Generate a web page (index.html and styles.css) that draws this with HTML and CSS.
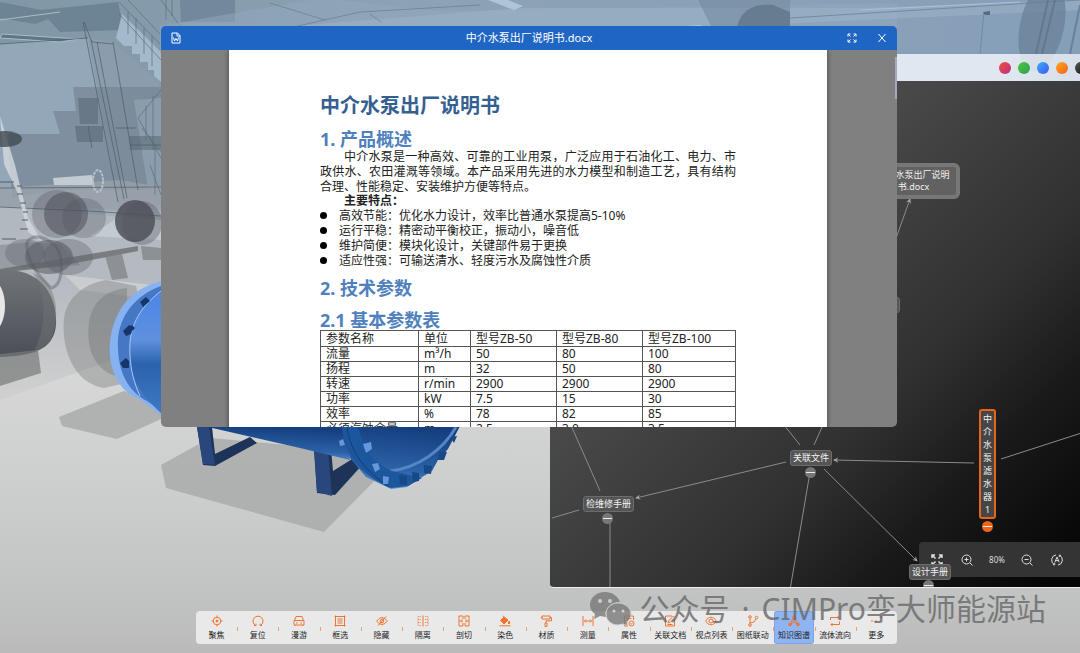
FILE: index.html
```html
<!DOCTYPE html>
<html lang="zh-CN">
<head>
<meta charset="utf-8">
<meta name="viewport" content="width=device-width, initial-scale=1">
<title>CIMPro 能源站</title>
<link rel="stylesheet" href="styles.css">
</head>
<body>
<main class="desktop">
  <svg class="scene" viewBox="0 0 1080 653" preserveAspectRatio="xMinYMin slice" aria-hidden="true">
    <defs>
      <linearGradient id="sky" x2="0" y2="1"><stop offset="0" stop-color="#8299ab"/><stop offset=".3" stop-color="#9dabb8"/><stop offset=".45" stop-color="#b9bdc3"/><stop offset=".6" stop-color="#cfcfcf"/><stop offset="1" stop-color="#d3d3d3"/></linearGradient>
      <linearGradient id="floor" x2="0" y2="1"><stop offset="0" stop-color="#d9d9d9"/><stop offset=".45" stop-color="#cdcece"/><stop offset=".8" stop-color="#c2c4c3"/><stop offset="1" stop-color="#bababa"/></linearGradient>
      <linearGradient id="roof" x2="1" y2="0"><stop offset="0" stop-color="#8197a6"/><stop offset=".4" stop-color="#8da2b4"/><stop offset="1" stop-color="#869fb9"/></linearGradient>
      <linearGradient id="pipe" x2="0" y2="1"><stop offset="0" stop-color="#4c86e6"/><stop offset=".4" stop-color="#5f90de"/><stop offset=".6" stop-color="#2b63ac"/><stop offset="1" stop-color="#3e77c6"/></linearGradient>
      <linearGradient id="tank" x1=".4" y1="0" x2=".2" y2="1"><stop offset="0" stop-color="#153f7f"/><stop offset=".65" stop-color="#2c62a8"/><stop offset="1" stop-color="#6699d8"/></linearGradient>
      <linearGradient id="ball" x2="0" y2="1"><stop offset="0" stop-color="#717477"/><stop offset="1" stop-color="#4b4e57"/></linearGradient>
    </defs>
    <rect width="1080" height="653" fill="url(#sky)"/>
    <rect width="1080" height="90" fill="url(#roof)"/>
    <path d="M0 400 118 358 161 345H1080V653H0z" fill="url(#floor)"/>
    <!-- rear walls and roof -->
    <path d="M0 44 88 38 120 210 0 206z" fill="#94a7b9"/>
    <path d="M88 38 113 42 161 84V205L120 210z" fill="#8b9dac"/>
    <path d="M0 2 62 14 35 24 0 18zM40 10 118 2 124 30 60 32z" fill="#6d8494"/>
    <path d="M180 0h55v22h-54z" fill="#73889a"/>
    <path d="M122 14 161 52V82L154 76 154 70 148 70 148 62 140 62 140 54 132 54 132 46 124 46 116 38z" fill="#a3bacd"/>
    <path d="M2 34 79 39 60 42 0 38zM0 20 60 12" fill="#5f7687" stroke="#a9bccb"/>
    <path d="M73 87H161V98L134 100 148 190H56L12 198 8 134H60L53 111H76z" fill="#73818f" opacity=".62"/>
    <path d="M78 98H98V124H80zM75 126h28v16H77zM129 136h32v14h-31z" fill="#505d68" opacity=".45"/>
    <path d="M0 188 120 180 161 187V210L0 207z" fill="#9aa1aa" opacity=".8"/>
    <path d="M0 207 100 215 161 220V280L90 276 0 270z" fill="#b5bac0" opacity=".8"/>
    <path d="M53 178 92 175 94 185H54zM120 216 161 220V240L90 236z" fill="#c3cbd2"/>
    <path d="M83 22 118 202M91 40 124 199M97 42 127 198M113 42 138 190M0 44 88 38M0 188 161 187M0 207 90 211 161 216M84 22 92 42 113 44M116 128h20M130 145h31M88 126 92 148" fill="none" stroke="#4f5c69" stroke-width="1" opacity=".7"/>
    <path d="M119 2 161 45M128 0 161 35M119 14 161 60M138 118 161 90M138 118 161 158M142 128 161 152M146 106V140M153 96V150M128 12V34M136 18V44M144 28V54M152 36V66M161 0 180 26M166 0V20M172 0V16M150 165l11 30M155 145v50" fill="none" stroke="#586b79" opacity=".65"/>
    <ellipse cx="98" cy="181" rx="5" ry="11" fill="none" stroke="#b9c1c8" stroke-width="2" stroke-dasharray="3 1"/>
    <path d="M0 116 15 165 28 218 42 242 28 232 18 194 4 164z" fill="#d5dade" opacity=".8"/>
    <path d="M0 182h14M17 186h5M17 194h6M20 203h6M23 212h5M22 220h6M20 229h8M2 239h14" stroke="#565d64" stroke-width="1"/>
    <ellipse cx="5" cy="139" rx="17" ry="8" fill="#414b50" opacity=".8"/>
    <!-- translucent vessels -->
    <g fill="#4f5159">
      <ellipse cx="57" cy="214" rx="25" ry="24" opacity=".3"/><ellipse cx="66" cy="214" rx="22" ry="22" opacity=".55"/><ellipse cx="84" cy="218" rx="22" ry="20" opacity=".28"/>
      <ellipse cx="142" cy="223" rx="20" ry="22" opacity=".35"/><ellipse cx="135" cy="221" rx="20" ry="21" opacity=".85"/>
      <ellipse cx="25" cy="253" rx="20" ry="14" opacity=".3"/><ellipse cx="49" cy="257" rx="24" ry="17" opacity=".5"/><ellipse cx="68" cy="257" rx="25" ry="18" opacity=".3"/>
    </g>
    <path d="M32 242 60 244 80 265 0 271V245z" fill="#626870" opacity=".35"/>
    <path d="M0 269 138 246V251L60 266 0 273z" fill="#606468" opacity=".7"/>
    <path d="M105 256 122 254 128 278 112 280zM141 246 161 248V260H143z" fill="#7c7f82" opacity=".7"/>
    <path d="M27 242c-2 18 12 34 24 46 12-2 12-26 8-36S36 230 27 242z" fill="none" stroke="#555b60" stroke-width="3" opacity=".4"/>
    <path d="M65 275 161 286V300L80 290z" fill="#d0d1d3" opacity=".8"/>
    <path d="M64 318c2-18 18-34 42-38l30 6 20 90-52 12c-32-5-43-42-40-70z" fill="#797b7a" opacity=".4"/>
    <path d="M89 322c4-22 18-32 38-34v90c-30-2-42-26-38-56z" fill="#6b6e6e" opacity=".35"/>
    <path d="M0 270c34-2 54 17 56 48s-22 38-56 39z" fill="url(#ball)"/>
    <path d="M33 273c24 8 29 42 17 69l-17 12c15-30 13-61 0-81z" fill="#747678" opacity=".45"/>
    <path d="M0 354 38 350 41 373 0 386z" fill="#777a79" opacity=".7"/>
    <path d="M59 417 124 391 161 405V419L117 439 62 426zM161 465 210 438 400 455 324 532 166 488z" fill="#a8aaa9" opacity=".82"/>
    <!-- pump body -->
    <path d="M161 281c-25 7-43 21-50 54-6 31 9 58 27 63l23 17z" fill="#87b2f1"/>
    <path d="M161 286c-27 10-45 32-43 63 1 27 13 44 29 52l14 10z" fill="#4577c4"/>
    <path d="M161 291c-22 18-33 36-31 65 1 23 9 36 31 57z" fill="url(#pipe)"/>
    <path d="M161 291c-23 18-33 37-31 65 1 15 4 27 10 40" fill="none" stroke="#a4c9fa" stroke-width="1"/>
    <path d="m140 302 6-5 4 4-7 6zM126 328l6-3 3 3-6 6zM123 331l6-6 4 3-2 6-5 2zM120 363l6-5 3 3v7h-6z" fill="#16366a"/>
    <path d="M197 427h15l3 27 35-17 7 6-42 23-12-1zM314 448h17l2 23 24-15 7 7-29 32-18-2z" fill="#1d3357"/>
    <path d="M197 427h12l6 38-12-1zM314 450h14l4 46-15-4z" fill="#29477c"/>
    <path d="M208 427H344L350 460 300 448z" fill="url(#tank)"/>
    <path d="M340 426H460L448 449 438 460 432 471 419 479 407 487 391 489 366 477 350 458z" fill="url(#tank)"/>
    <path d="M456 427c-13 23-38 41-66 44" fill="none" stroke="#5585c2" stroke-width="3"/>
    <path d="M342 427c3 27 19 49 49 61l17-2 14-8-30-7c-18-7-28-22-34-44z" fill="#1c569c"/>
    <path d="M347 427c4 28 20 45 42 60" fill="none" stroke="#133e78" stroke-width="1"/>
    <g fill="#6597dc"><path d="m339 441 4-2 2 6-5 1zM363 444l8-2 1 7-6 4zM372 464l6-1 2 6-5 3zM383 476l6 1-1 7h-5z"/></g>
    <g fill="#174987"><path d="m399 475 8 1v9l-7-1zM412 472l7 1v8l-6 1zM424 465l8 1-1 8-7-1zM439 451l8 1-3 8h-6zM450 437l7-1-3 7z"/></g>
    <!-- roof on the right side -->
    <path d="M160 26 310 0H340L440 11 897 3V54H160z" fill="#91a8bf" opacity=".5"/>
    <path d="M240 30 520 8 860 8 1080 0V10L800 23 560 34z" fill="#9db3c8" opacity=".5"/>
    <path d="M488 0 514 10 523 6 508 0zM560 35 700 25 720 34H560z" fill="#b6cde0" opacity=".8"/>
    <path d="M698 0 790 0V34H715z" fill="#748b9f" opacity=".6"/>
    <path d="M736 34c2-25 19-31 37-29l17 7v22z" fill="#5d7486" opacity=".75"/>
    <path d="M270 3 325 20M370 14l11 8M280 30 360 12 480 5M790 18 1080 0" fill="none" stroke="#647b8e" opacity=".65"/>
    <path d="M860 10 1020 2" fill="none" stroke="#abc0d4"/>
    <path d="M984 12 980 54" fill="none" stroke="#728aa1"/>
    <ellipse cx="1042" cy="26" rx="22" ry="46" transform="rotate(12 1042 26)" fill="#627b91" opacity=".62"/>
    <path d="M1048 0 1036 54M1055 0 1042 54M1080 5 1070 54" stroke="#566f86" stroke-width="2" opacity=".6"/>
    <path d="m983 12 7-1v4h-5z" fill="#566b7e"/>
  </svg>
  <button class="side-handle" type="button" aria-label="展开侧栏"></button>

  <section class="graph" aria-label="知识图谱">
    <header class="graph-bar">
      <button class="dot dot-red" type="button" aria-label="红色主题"></button>
      <button class="dot dot-green" type="button" aria-label="绿色主题"></button>
      <button class="dot dot-blue" type="button" aria-label="蓝色主题"></button>
      <button class="dot dot-orange" type="button" aria-label="橙色主题"></button>
      <button class="dot dot-dark" type="button" aria-label="深色主题"></button>
    </header>
    <div class="canvas">
      <svg class="edges" viewBox="550 81 560 506" preserveAspectRatio="xMinYMin slice" aria-hidden="true">
        <defs><marker id="arrow" viewBox="0 0 8 8" refX="6" refY="4" markerWidth="7" markerHeight="7" orient="auto"><path d="M1 1 7 4 1 7 3 4z" fill="#a5a5a5"/></marker></defs>
        <g fill="none" stroke="#8b8b8b">
          <path d="M570 423 600 491M552 518 579 510M610 523V590M784 425 800 445M823 425 814 445M1001 459 1100 427M809 478 790 590"/>
          <path marker-end="url(#arrow)" d="M786 462 636 498"/>
          <path marker-end="url(#arrow)" d="M974 463 834 460"/>
          <path marker-end="url(#arrow)" d="M824 469 917 561"/>
          <path marker-end="url(#arrow)" d="M894 244 910 199"/>
        </g>
      </svg>
      <div class="node node-doc">中介水泵出厂说明<br>书.docx</div>
      <div class="node node-behind">维修记录s</div>
      <div class="node node-files">关联文件</div>
      <button class="fold fold-files" type="button" aria-label="折叠关联文件"></button>
      <div class="node node-repair">检维修手册</div>
      <button class="fold fold-repair" type="button" aria-label="折叠检维修手册"></button>
      <div class="node node-root"><span>中</span><span>介</span><span>水</span><span>泵</span><span>滤</span><span>水</span><span>器</span><span>1</span></div>
      <button class="fold fold-root" type="button" aria-label="折叠中介水泵滤水器1"></button>
      <div class="zoom-bar">
        <button type="button" aria-label="适应窗口"><svg viewBox="0 0 12 12"><path d="M4.500 4.500 1 1M1 4V1h3M7.500 4.500 11 1M8 1h3v3M4.500 7.500 1 11M1 8v3h3M7.500 7.500 11 11M8 11h3V8" stroke-width="1.500"/></svg></button>
        <button type="button" aria-label="放大"><svg viewBox="0 0 12 12"><circle cx="5.500" cy="5.500" r="4.500"/><path d="m9 9 2.500 2.500M3.500 5.500h4M5.500 3.500v4"/></svg></button>
        <output>80%</output>
        <button type="button" aria-label="缩小"><svg viewBox="0 0 12 12"><circle cx="5.500" cy="5.500" r="4.500"/><path d="m9 9 2.500 2.500M3.500 5.500h4"/></svg></button>
        <button type="button" aria-label="自动布局"><svg viewBox="0 0 12 12"><path d="M3.500 10.700A5.200 5.200 0 0 1 5 .9M8.500 1.300A5.200 5.200 0 0 1 7 11.100M2 10.700h1.700V9M10 1.300H8.300V3M3.800 8.300 6 3l2.200 5.300M4.700 6.600h2.600"/></svg></button>
      </div>
      <button class="fold fold-design" type="button" aria-label="折叠设计手册"></button>
      <div class="node node-design">设计手册</div>
    </div>
  </section>

  <section class="viewer" aria-label="文档预览">
    <header class="viewer-bar">
      <svg class="file-icon" viewBox="0 0 10 12" aria-hidden="true"><path d="M1 1h5.500L9 3.500V11H1zM6 1v3h3M2.500 5.500l1 3.500L5 6.500 6.500 9l1-3.500"/></svg>
      <h1 class="viewer-title">中介水泵出厂说明书.docx</h1>
      <div class="viewer-actions">
        <button type="button" aria-label="全屏"><svg viewBox="0 0 10 10"><path d="M1 3.500V1h2.500M1 1l2.500 2.500M6.500 1H9v2.500M9 1 6.500 3.500M1 6.500V9h2.500M1 9l2.500-2.500M6.500 9H9V6.500M9 9 6.500 6.500"/></svg></button>
        <button type="button" aria-label="关闭"><svg viewBox="0 0 10 10"><path d="m1.500 1 7 8M8.500 1l-7 8"/></svg></button>
      </div>
    </header>
    <div class="viewer-body">
      <article class="page">
        <h2 class="doc-title">中介水泵出厂说明书</h2>
        <h3 class="doc-heading">1. 产品概述</h3>
        <p class="doc-text">中介水泵是一种高效、可靠的工业用泵，广泛应用于石油化工、电力、市政供水、农田灌溉等领域。本产品采用先进的水力模型和制造工艺，具有结构合理、性能稳定、安装维护方便等特点。</p>
        <p class="doc-lead">主要特点：</p>
        <ul class="doc-list">
          <li>高效节能：优化水力设计，效率比普通水泵提高5-10%</li>
          <li>运行平稳：精密动平衡校正，振动小，噪音低</li>
          <li>维护简便：模块化设计，关键部件易于更换</li>
          <li>适应性强：可输送清水、轻度污水及腐蚀性介质</li>
        </ul>
        <h3 class="doc-heading">2. 技术参数</h3>
        <h4 class="doc-heading doc-subheading">2.1 基本参数表</h4>
        <table class="doc-table">
          <colgroup><col class="col-name"><col class="col-unit"><col class="col-model"><col class="col-model"><col></colgroup>
          <thead><tr><th>参数名称</th><th>单位</th><th>型号ZB-50</th><th>型号ZB-80</th><th>型号ZB-100</th></tr></thead>
          <tbody>
            <tr><td>流量</td><td>m³/h</td><td>50</td><td>80</td><td>100</td></tr>
            <tr><td>扬程</td><td>m</td><td>32</td><td>50</td><td>80</td></tr>
            <tr><td>转速</td><td>r/min</td><td>2900</td><td>2900</td><td>2900</td></tr>
            <tr><td>功率</td><td>kW</td><td>7.5</td><td>15</td><td>30</td></tr>
            <tr><td>效率</td><td>%</td><td>78</td><td>82</td><td>85</td></tr>
            <tr><td>必须汽蚀余量</td><td>m</td><td>2.5</td><td>3.0</td><td>3.5</td></tr>
          </tbody>
        </table>
      </article>
    </div>
    <span class="scroll-thumb"></span>
  </section>

  <nav class="dock" aria-label="工具栏">
    <button class="tool" type="button"><svg viewBox="0 0 12 12"><circle cx="6" cy="6" r="3.800"/><circle cx="6" cy="6" r="1" class="solid"/><path d="M6 .5v2.500M6 9v2.500M.5 6H3M9 6h2.500"/></svg>聚焦</button>
    <button class="tool" type="button"><svg viewBox="0 0 12 12"><path d="M3.500 10.500A5 5 0 1 1 8.500 10.500M2 10.500h2V8.700M10 10.500H8V8.700"/></svg>复位</button>
    <button class="tool" type="button"><svg viewBox="0 0 12 12"><path d="M1 5.500h10V10H1zM1.500 5.500 3 1.500h6l1.500 4M3 8h1.500M7.500 8H9M2 10v1M10 10v1"/></svg>漫游</button>
    <button class="tool" type="button"><svg viewBox="0 0 12 12"><path d="M1.500.5v11M10.500.5v11M.5 1.500h11M.5 10.500h11M3.500 4h5M3.500 6h5M3.500 8h5"/></svg>框选</button>
    <button class="tool" type="button"><svg viewBox="0 0 12 12"><path d="M.7 6Q3 2.500 6 2.500T11.300 6Q9 9.500 6 9.500T.7 6zM2 10.500l8-9"/><circle cx="6" cy="6" r="1.800"/></svg>隐藏</button>
    <button class="tool" type="button"><svg viewBox="0 0 12 12"><path d="M6 .5v11"/><path d="M4 1.500H1v9h3M8 1.500h3v9H8M1 4.500h3M1 7.500h3M8 4.500h3M8 7.500h3" stroke-dasharray="1.500 .7" opacity=".7"/></svg>隔离</button>
    <button class="tool" type="button"><svg viewBox="0 0 12 12"><path d="M5 1H1v10h4M7 1h4v10H7M5 1v3M7 1v3M5 8v3M7 8v3M1 6h3M8 6h3M4 4.500v3M8 4.500v3"/></svg>剖切</button>
    <button class="tool" type="button"><svg viewBox="0 0 12 12"><path class="solid" d="M5 2 1.500 5.500 5 9l4-4zM10 6l1 2-1 1-1-1z"/><path d="M4 .7 6 3M.5 10.800h11"/></svg>染色</button>
    <button class="tool" type="button"><svg viewBox="0 0 12 12"><path d="M2 1h8v3H2zM10 2.500h1.500v3.300H6v2M5 8h2v3.500H5zM2 2.500H.8"/></svg>材质</button>
    <button class="tool" type="button"><svg viewBox="0 0 12 12"><path d="M1 1v10M11 1v10M2.500 6h7M4 4.500 2.500 6 4 7.500M8 4.500 9.500 6 8 7.500"/></svg>测量</button>
    <button class="tool" type="button"><svg viewBox="0 0 12 12"><path d="M5 11H1.500V1h9v4M3.500 3.500h5M3.500 6H5"/><circle cx="8.500" cy="8.500" r="2.500"/><path d="m7.500 8.500.8.800 1.300-1.500"/></svg>属性</button>
    <button class="tool" type="button"><svg viewBox="0 0 12 12"><path d="M8 1H1.500v10h9V4M4 8l.5-2 5-5 1.500 1.500-5 5zM3.500 9.500h5"/></svg>关联文档</button>
    <button class="tool" type="button"><svg viewBox="0 0 12 12"><path d="M.7 6C3 1 9 1 11.300 6 9 11 3 11 .7 6z"/><circle cx="6" cy="6" r="2"/></svg>视点列表</button>
    <button class="tool" type="button"><svg viewBox="0 0 12 12"><path d="M3 3.500v5M3 8q5 0 6-4"/><circle cx="3" cy="2" r="1.300"/><circle cx="3" cy="10" r="1.300"/><circle cx="9.500" cy="2.500" r="1.300"/></svg>图纸联动</button>
    <button class="tool tool-active" type="button" aria-pressed="true"><svg viewBox="0 0 12 12"><circle cx="6" cy="2.500" r="1.500" class="solid"/><circle cx="2" cy="9.500" r="1.300" class="solid"/><circle cx="10" cy="9.500" r="1.300" class="solid"/><path d="M6 3v4L2 9.500M6 7l4 2.500M5.500 3 2 9.500M6.500 3 10 9.500"/></svg>知识图谱</button>
    <button class="tool" type="button"><svg viewBox="0 0 12 12"><path d="M1.500 5V2.500H10M8.500 1 10 2.500 8.500 4M10.500 6.500V9.500H2M3.500 8 2 9.500 3.500 11"/></svg>流体流向</button>
    <button class="tool" type="button"><svg viewBox="0 0 12 12"><path d="M1 6h2M5 6h2"/><circle cx="11" cy="2" r="1" class="solid"/></svg>更多</button>
  </nav>

  <div class="watermark">
    <svg viewBox="0 0 42 34" aria-hidden="true"><path fill="#777" d="M15 0C6 0 0 6 0 13c0 4 2 7 5 9l-1 5 6-3 6 1c-2-9 5-15 14-15C28 4 22 0 15 0z"/><path fill="#777" stroke="#ccc" d="M28 11c-7 0-12 5-12 11s5 11 12 11l5-1 5 2-1-4c3-2 4-5 4-8 0-6-6-11-13-11z"/><g fill="#d0d0d0"><circle cx="10" cy="9" r="2"/><circle cx="20" cy="9" r="2"/><circle cx="24" cy="19" r="1.500"/><circle cx="33" cy="19" r="1.500"/></g></svg>
    <p class="watermark-text"><span>公众号</span><span>·</span><span>CIMPro孪大师能源站</span></p>
  </div>
</main>
</body>
</html>
```
FILE: styles.css
```css
* { box-sizing: border-box; }

body {
  margin: 0;
  font-family: "Noto Sans", "Noto Sans CJK SC", sans-serif;
  color: #222;
}

h1, h2, h3, h4, p, ul { margin: 0; padding: 0; }

button {
  padding: 0;
  border: 0;
  background: none;
  font: inherit;
  color: inherit;
  cursor: pointer;
}

.desktop {
  position: relative;
  display: flex;
  flex-direction: column;
  justify-content: flex-end;
  min-height: 100vh;
  padding: 0 183px 9px 196px;
  overflow: hidden;
  background: #bababa;
}

.scene {
  position: absolute;
  inset: 0;
  width: 100%;
  height: 100%;
}

.side-handle {
  position: absolute;
  left: -20px;
  top: 281px;
  width: 25px;
  height: 50px;
  border-radius: 50%;
  background: #e6e6e6;
}

/* Knowledge graph window */
.graph {
  position: absolute;
  left: 550px;
  right: -30px;
  top: 54px;
  bottom: 65px;
  display: flex;
  flex-direction: column;
  border-bottom: 1px solid #eee;
  border-radius: 4px;
  overflow: hidden;
}

.graph-bar {
  display: flex;
  align-items: center;
  justify-content: flex-end;
  gap: 7px;
  height: 27px;
  padding-right: 23px;
  background: linear-gradient(90deg, rgba(240, 244, 250, .85) 80%, rgba(240, 244, 250, .72));
}

.dot { width: 12px; height: 12px; border-radius: 50%; }
.dot-red { background: linear-gradient(135deg, #f0503c, #bb2c86); }
.dot-green { background: linear-gradient(135deg, #4bca32, #2f9e5c); }
.dot-blue { background: linear-gradient(135deg, #37b0fb, #4255f0); }
.dot-orange { background: linear-gradient(135deg, #ffa820, #f4601c); }
.dot-dark { background: linear-gradient(135deg, #555, #111); }

.canvas {
  position: relative;
  flex: 1;
  background: linear-gradient(135deg, #5a5a5a 0%, #484848 35%, #303030 62%, #1a1a1a 76%, #060606 94%);
}

.edges { position: absolute; inset: 0; width: 100%; height: 100%; }

.node {
  position: absolute;
  padding: 0 2px;
  border: 1px solid #6c6c6c;
  border-radius: 3px;
  background: #555;
  color: #f2f2f2;
  font-size: 9px;
  line-height: 14px;
  text-align: center;
  white-space: nowrap;
}

.node-doc {
  left: 317px;
  top: 82px;
  width: 93px;
  padding: 2px 4px;
  border: 4px solid #777;
  border-radius: 6px;
  background: #616161;
  line-height: 12px;
}

.node-behind { left: 304px; top: 216px; }
.node-files { left: 240px; top: 369px; }
.node-repair { left: 33px; top: 415px; }
.node-design { left: 359px; top: 483px; }

.node-root {
  left: 429px;
  top: 328px;
  display: flex;
  flex-direction: column;
  width: 17px;
  padding: 1px 0;
  border: 2px solid #e8641b;
  background: #454545;
  line-height: 13px;
}

.fold {
  position: absolute;
  display: grid;
  place-items: center;
  width: 11px;
  height: 11px;
  border-radius: 50%;
  background: #777;
}

.fold::before { content: ""; width: 9px; height: 1px; background: #eee; }
.fold-files { left: 255px; top: 386px; }
.fold-repair { left: 52px; top: 432px; }
.fold-design { left: 373px; top: 499px; }
.fold-root { left: 432px; top: 440px; background: #f0641a; }

.zoom-bar {
  position: absolute;
  left: 369px;
  right: 0;
  bottom: 10px;
  display: flex;
  align-items: center;
  height: 35px;
  padding-left: 3px;
  border-radius: 4px;
  background: #343434;
  color: #ddd;
  font-size: 8px;
}

.zoom-bar > * { display: flex; align-items: center; justify-content: center; width: 30px; }
.zoom-bar svg { width: 12px; height: 12px; fill: none; stroke: #ddd; }

/* Document window */
.viewer {
  position: absolute;
  left: 161px;
  right: 183px;
  top: 26px;
  bottom: 226px;
  display: flex;
  flex-direction: column;
  border-radius: 5px;
  overflow: hidden;
  background: #808080;
}

.viewer-bar {
  display: grid;
  grid-template-columns: 60px 1fr 60px;
  align-items: center;
  height: 24px;
  background: #1f66c4;
  color: #fff;
}

.file-icon { width: 10px; height: 12px; margin-left: 10px; fill: none; stroke: #fff; }
.viewer-title { font-size: 11px; font-weight: 400; line-height: 24px; text-align: center; }
.viewer-actions { display: flex; }
.viewer-actions button { display: grid; place-items: center; width: 30px; height: 24px; }
.viewer-actions svg { width: 10px; height: 10px; fill: none; stroke: #fff; }

.viewer-body {
  flex: 1;
  min-height: 0;
  padding: 0 70px 0 68px;
  overflow: hidden;
}

.page {
  min-height: 100%;
  padding: 43px 91px;
  background: #fff;
  box-shadow: 0 0 5px rgba(0, 0, 0, .5);
  font-size: 12px;
  line-height: 15px;
}

.scroll-thumb {
  position: absolute;
  right: 0;
  top: 31px;
  width: 2px;
  height: 42px;
  background: #a4a9bd;
}

.doc-title { color: #365f91; font-size: 20px; line-height: 26px; }
.doc-heading { margin-top: 10px; color: #4f81bd; font-size: 18px; line-height: 20px; }
.doc-subheading { margin-top: 12px; }
.doc-text { text-align: justify; text-indent: 24px; }
.doc-lead { font-weight: 700; line-height: 14px; text-indent: 24px; }
.doc-list { list-style: none; }
.doc-list li { display: flex; align-items: center; gap: 12px; }
.doc-list li::before { content: ""; width: 7px; height: 7px; border-radius: 50%; background: #000; }

.doc-table {
  width: 100%;
  border-collapse: collapse;
  table-layout: fixed;
  line-height: 14px;
}

.doc-table th,
.doc-table td {
  height: 15px;
  padding: 0 5px;
  border: 1px solid #555;
  font-weight: 400;
  text-align: left;
  white-space: nowrap;
}

.doc-table th { height: 16px; }
.col-name { width: 98px; }
.col-unit { width: 52px; }
.col-model { width: 86px; }

/* Bottom toolbar */
.dock {
  position: relative;
  display: flex;
  height: 33px;
  border-radius: 4px;
  background: rgba(240, 240, 240, .86);
}

.tool {
  position: relative;
  display: flex;
  flex: 1 1 0;
  flex-direction: column;
  align-items: center;
  justify-content: center;
  gap: 2px;
  min-width: 0;
  margin: 1px 2px;
  border-radius: 2px;
  font-size: 8px;
  line-height: 12px;
  white-space: nowrap;
}

.tool svg { width: 12px; height: 12px; fill: none; stroke: #ef7430; overflow: visible; }
.tool .solid { fill: #ef7430; }

.tool:not(:last-child)::after {
  content: "";
  position: absolute;
  right: -3px;
  top: 15px;
  width: 1px;
  height: 4px;
  background: #efa070;
}

.tool-active { background: #8eb4f2; box-shadow: 0 0 0 1px #78a4ef; }

.watermark {
  position: absolute;
  right: 34px;
  bottom: 22px;
  display: flex;
  align-items: center;
  gap: 8px;
  color: #666;
  font-size: 30px;
  line-height: 44px;
  white-space: nowrap;
  opacity: .78;
  pointer-events: none;
}

.watermark svg { width: 42px; height: 34px; }
.watermark-text { display: flex; gap: 12px; }
```
